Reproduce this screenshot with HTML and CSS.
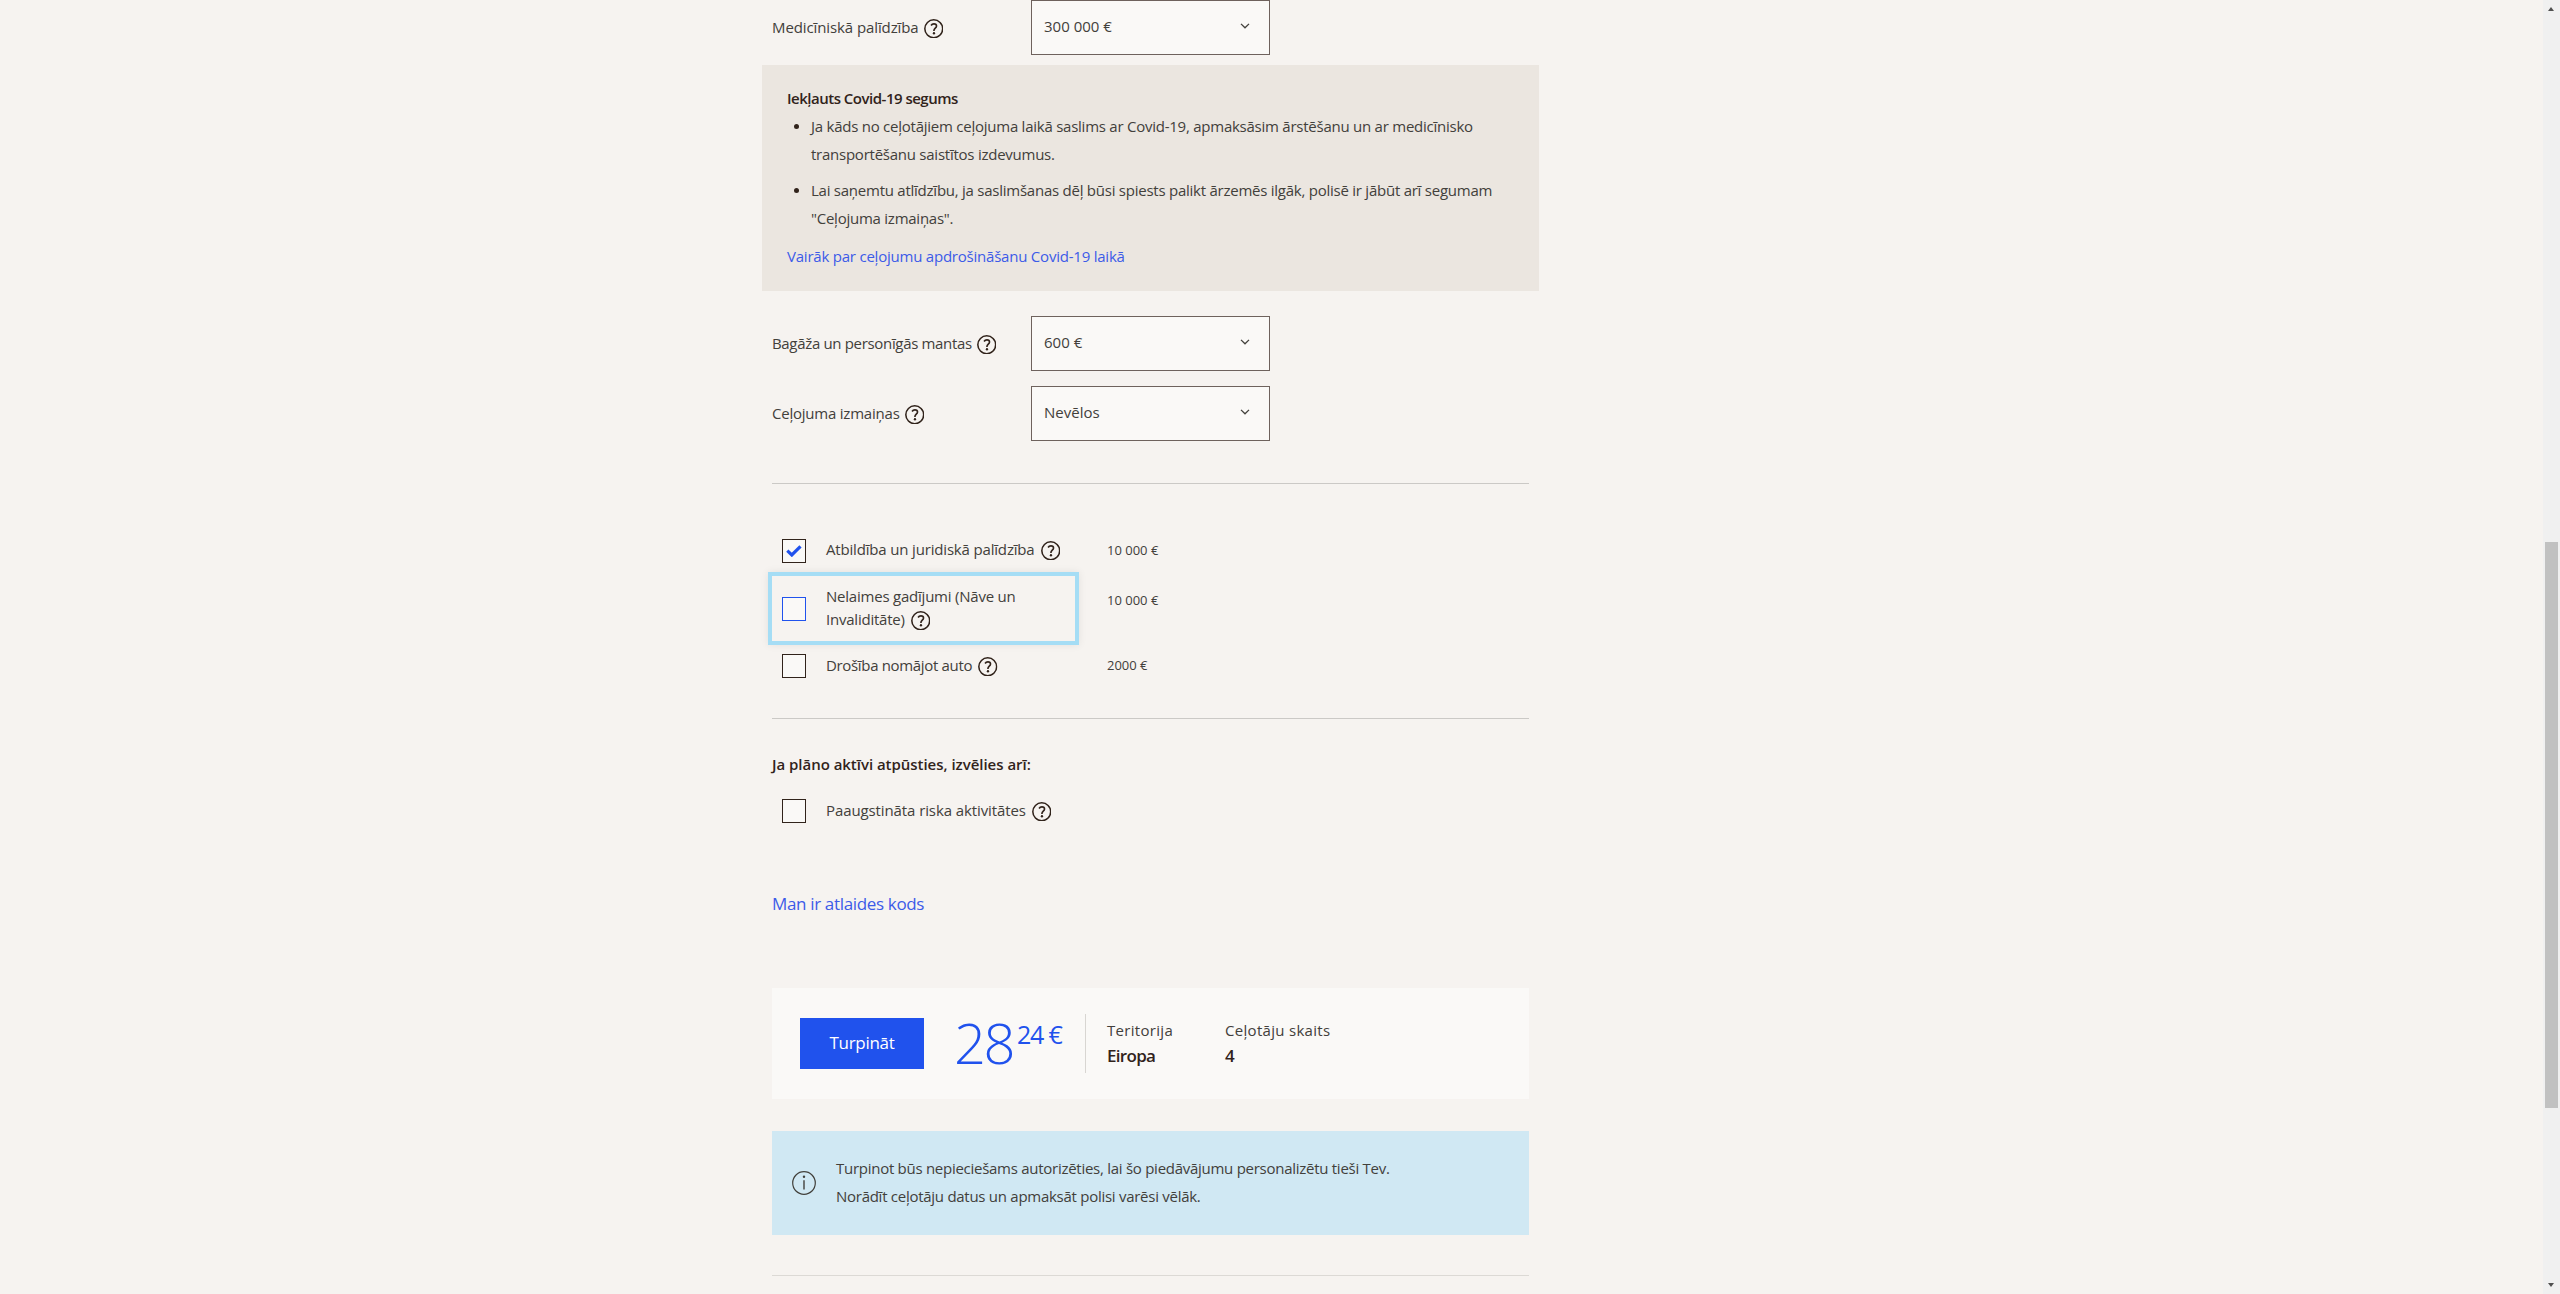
FILE: index.html
```
<!DOCTYPE html>
<html lang="lv">
<head>
<meta charset="utf-8">
<title>Ceļojumu apdrošināšana</title>
<link rel="stylesheet" href="styles.css">
</head>
<body>
<svg class="defs" aria-hidden="true">
  <symbol id="help" viewBox="0 0 19 19">
    <circle cx="9.5" cy="9.5" r="8.7" fill="none" stroke="currentColor" stroke-width="1.5"/>
    <path d="M6.9 6.3C7.6 5.1 8.6 4.7 9.7 4.7c1.5 0 2.5.8 2.5 2.1 0 2-2.5 2.200-2.500 4.300v.6" fill="none" stroke="currentColor" stroke-width="1.600"/>
    <circle cx="9.700" cy="13.900" r="1.150" fill="currentColor"/>
  </symbol>
  <symbol id="chevron" viewBox="0 0 10 6">
    <path d="M1 .9l4 3.900 4-3.900" fill="none" stroke="currentColor" stroke-width="1.300"/>
  </symbol>
</svg>

<main class="form">
  <div class="field">
    <span class="label loose">Medicīniskā palīdzība<svg class="help"><use href="#help"/></svg></span>
    <div class="select"><span>300 000 €</span><svg class="chevron"><use href="#chevron"/></svg></div>
  </div>

  <section class="covid">
    <strong class="covid-title">Iekļauts Covid-19 segums</strong>
    <ul class="covid-list">
      <li>Ja kāds no ceļotājiem ceļojuma laikā saslims ar Covid-19, apmaksāsim ārstēšanu un ar medicīnisko<br>transportēšanu saistītos izdevumus.</li>
      <li>Lai saņemtu atlīdzību, ja saslimšanas dēļ būsi spiests palikt ārzemēs ilgāk, polisē ir jābūt arī segumam<br>"Ceļojuma izmaiņas".</li>
    </ul>
    <a class="link">Vairāk par ceļojumu apdrošināšanu Covid-19 laikā</a>
  </section>

  <div class="field">
    <span class="label tight">Bagāža un personīgās mantas<svg class="help"><use href="#help"/></svg></span>
    <div class="select"><span>600 €</span><svg class="chevron"><use href="#chevron"/></svg></div>
  </div>
  <div class="field">
    <span class="label">Ceļojuma izmaiņas<svg class="help"><use href="#help"/></svg></span>
    <div class="select"><span>Nevēlos</span><svg class="chevron"><use href="#chevron"/></svg></div>
  </div>

  <hr class="rule rule-options">

  <div class="option">
    <div class="check-item">
      <span class="box"><svg class="tick" viewBox="0 0 16 12"><path d="M1.300 5.700l4.500 4.300 8.700-8.600" fill="none" stroke="currentColor" stroke-width="3.200"/></svg></span>
      <span class="check-text check-first">Atbildība un juridiskā palīdzība<svg class="help"><use href="#help"/></svg></span>
    </div>
    <span class="amount">10 000 €</span>
  </div>
  <div class="option">
    <div class="check-item focused">
      <span class="box"></span>
      <span class="check-text">Nelaimes gadījumi (Nāve un<br>Invaliditāte)<svg class="help"><use href="#help"/></svg></span>
    </div>
    <span class="amount amount-low">10 000 €</span>
  </div>
  <div class="option">
    <div class="check-item">
      <span class="box"></span>
      <span class="check-text tight">Drošība nomājot auto<svg class="help"><use href="#help"/></svg></span>
    </div>
    <span class="amount">2000 €</span>
  </div>

  <hr class="rule rule-active">

  <strong class="active-title">Ja plāno aktīvi atpūsties, izvēlies arī:</strong>
  <div class="option option-risk">
    <div class="check-item">
      <span class="box"></span>
      <span class="check-text loose">Paaugstināta riska aktivitātes<svg class="help"><use href="#help"/></svg></span>
    </div>
  </div>

  <a class="link promo">Man ir atlaides kods</a>

  <section class="summary">
    <button class="continue">Turpināt</button>
    <div class="price"><span class="whole">28</span><span class="cents">24 €</span></div>
    <dl class="facts">
      <div class="fact"><dt>Teritorija</dt><dd>Eiropa</dd></div>
      <div class="fact"><dt>Ceļotāju skaits</dt><dd>4</dd></div>
    </dl>
  </section>

  <section class="notice">
    <svg class="info" viewBox="0 0 24 24"><circle cx="12" cy="12" r="11.300" fill="none" stroke="currentColor" stroke-width="1.200"/><path d="M12 9.200v9.300" stroke="currentColor" stroke-width="1.400"/><circle cx="12" cy="5.700" r="1.200" fill="currentColor"/></svg>
    <p class="notice-text">Turpinot būs nepieciešams autorizēties, lai šo piedāvājumu personalizētu tieši Tev.<br>Norādīt ceļotāju datus un apmaksāt polisi varēsi vēlāk.</p>
  </section>

  <hr class="rule rule-end">
</main>

<div class="scrollbar"><i class="arrow up"></i><i class="thumb"></i><i class="arrow down"></i></div>
</body>
</html>
```
FILE: styles.css
```
* { box-sizing: border-box; }
html { overflow: hidden; }
body {
  margin: 0;
  height: 1294px;
  overflow: hidden;
  background: #f6f3f0;
  color: #42403b;
  font: 400 15px/28px "Open Sans", "Liberation Sans", sans-serif;
  letter-spacing: -0.22px;
}
.defs { position: absolute; width: 0; height: 0; }
.form { width: 757px; margin-left: 772px; }

.field { display: flex; align-items: center; height: 55px; }
.field + .field { margin-top: 15px; }
.label { width: 259px; padding-bottom: 2px; line-height: 24px; }
.loose { letter-spacing: -0.100px; }
.tight { letter-spacing: -0.330px; }
.help {
  width: 19.500px; height: 19.500px;
  margin-left: 5px;
  vertical-align: -5.500px;
  color: #31231b;
}
.select {
  display: flex; align-items: center; justify-content: space-between;
  width: 239px; height: 55px;
  padding: 0 19px 3px 12px;
  border: 1px solid #6e625d;
  background: #faf9f7;
  letter-spacing: 0;
}
.chevron { width: 10px; height: 6px; }

.covid {
  margin: 10px -10px 25px;
  padding: 19px 14px 21px 25px;
  background: #ebe6e0;
}
.covid-title { display: block; color: #31231b; font-weight: 600; letter-spacing: -0.500px; }
.covid-list { margin: 0; padding: 0; list-style: none; letter-spacing: -0.245px; }
.covid-list li { position: relative; padding-left: 24px; margin-bottom: 8px; white-space: nowrap; }
.covid-list li::before {
  content: "";
  position: absolute; left: 7px; top: 12px;
  width: 5px; height: 5px;
  border-radius: 50%;
  background: #31231b;
}
.link { display: block; color: #3c5be8; }
.covid .link { margin-top: 10px; }

.rule { height: 1px; margin: 0; border: 0; background: #cbc9c6; }
.rule-options { margin: 42px 0 46px; }
.rule-active { margin: 31px 0 33px; }
.rule-end { margin-top: 40px; background: #dcd9d5; }

.option { display: flex; margin-left: -4px; }
.check-item {
  display: flex; align-items: center; gap: 20px;
  width: 311px; height: 42px;
  padding-left: 14px;
}
.box {
  display: flex; align-items: center; justify-content: center;
  width: 24px; height: 24px;
  border: 1px solid #31231b;
  background: #faf9f7;
}
.tick { width: 16px; height: 12px; color: #2052ed; }
.check-text { padding-bottom: 2px; line-height: 23px; }
.check-first { padding-bottom: 4px; letter-spacing: -0.170px; }
.check-text .help { margin-left: 6px; }
.focused {
  height: 73px;
  padding-left: 10px;
  border: 4px solid #a5ddf5;
  box-shadow: 0 0 8px rgba(0, 0, 0, .08);
}
.focused .box { border-color: #2052ed; }
.amount { margin: 10px 0 0 28px; font-size: 13px; line-height: 20px; letter-spacing: 0; }
.amount-low { margin-top: 18px; }

.active-title { display: block; color: #31231b; font-weight: 600; line-height: 24px; letter-spacing: -0.030px; }
.option-risk { margin-top: 14px; }
.promo { margin-top: 58px; font-size: 17px; letter-spacing: -0.340px; }

.summary {
  display: flex; align-items: center;
  height: 111px;
  margin-top: 70px;
  padding-left: 28px;
  background: #faf9f7;
}
.continue {
  width: 124px; height: 51px;
  border: 0; padding: 0 0 2px;
  background: #2052ed; color: #fff;
  font: inherit; font-size: 17px; letter-spacing: -0.300px;
}
.price { display: flex; width: 161px; height: 59px; padding-left: 30px; color: #2052ed; }
.whole { width: 63px; font-size: 56px; font-weight: 300; line-height: 57px; letter-spacing: -2.500px; }
.cents { font-size: 25px; font-weight: 400; line-height: 40px; letter-spacing: -1.200px; }
.facts { display: flex; height: 59px; margin: 0; padding-left: 21px; border-left: 1px solid #d8d6d2; }
.fact { width: 118px; padding-top: 4px; line-height: 25px; white-space: nowrap; }
.fact dt { font-size: 15px; letter-spacing: .3px; }
.fact dd { margin: 0; color: #31231b; font-size: 17px; font-weight: 600; letter-spacing: -0.700px; }

.notice {
  display: flex; align-items: center; gap: 20px;
  height: 104px;
  margin-top: 32px;
  padding-left: 20px;
  background: #d0e8f3;
}
.info { width: 24px; height: 24px; }
.notice-text { margin: 0; padding-bottom: 2px; letter-spacing: -0.270px; }

.scrollbar { position: fixed; top: 0; right: 0; width: 17px; height: 1294px; background: #f0f0f0; }
.thumb { position: absolute; left: 2px; top: 542px; width: 13px; height: 566px; background: #c1c1c1; }
.arrow { position: absolute; left: 5px; border: solid transparent; border-width: 0 3.500px; }
.up { top: 7px; border-bottom: 4px solid #505050; }
.down { bottom: 7px; border-top: 4px solid #505050; }
```
